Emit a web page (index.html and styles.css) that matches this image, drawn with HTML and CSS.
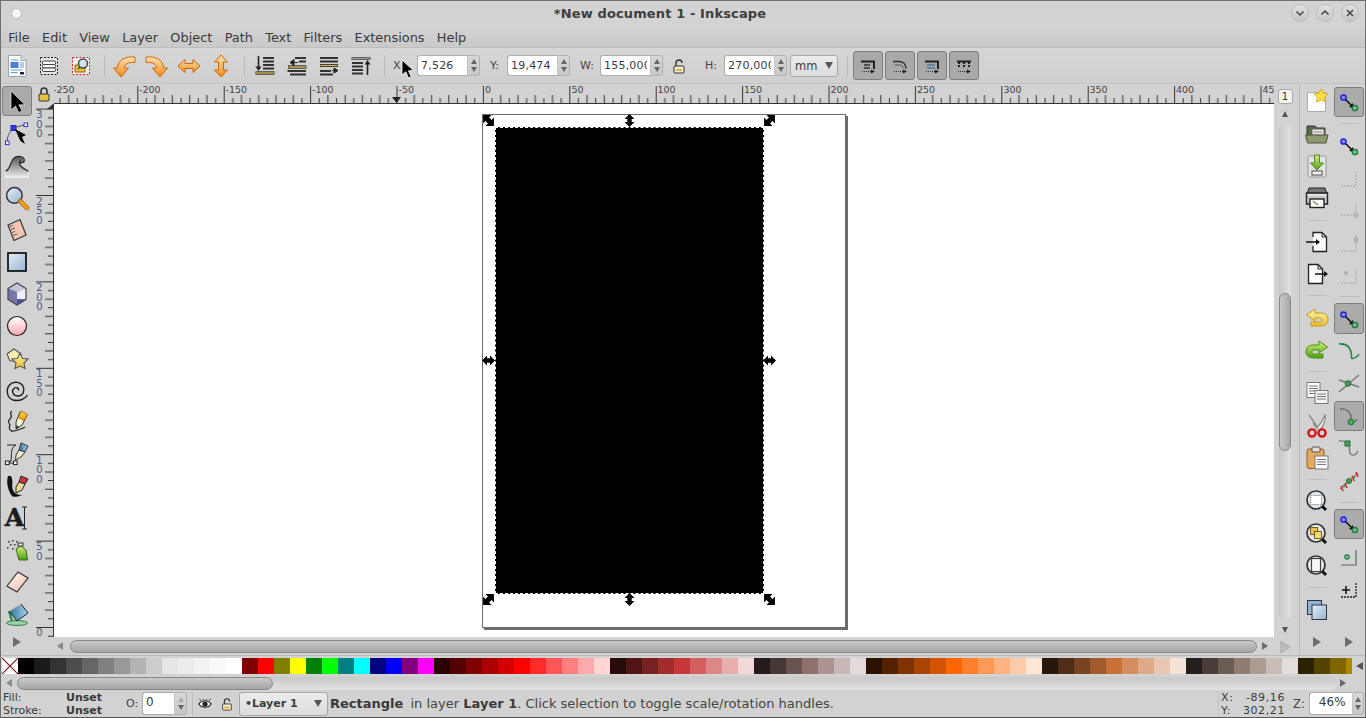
FILE: index.html
```html
<!DOCTYPE html>
<html lang="en">
<head>
<meta charset="utf-8">
<title>*New document 1 - Inkscape</title>
<link rel="stylesheet" href="styles.css">
</head>
<body>
<svg class="defs" aria-hidden="true">
  <defs>
    <linearGradient id="gO" x1="0" y1="0" x2="0" y2="1"><stop offset="0" stop-color="#ffe2b0"/><stop offset="1" stop-color="#f18a14"/></linearGradient>
    <linearGradient id="gY" x1="0" y1="0" x2="0" y2="1"><stop offset="0" stop-color="#fff6b0"/><stop offset="1" stop-color="#e8bc2c"/></linearGradient>
    <linearGradient id="gYs" x1="0" y1="0" x2="0" y2="1"><stop offset="0" stop-color="#ffe040"/><stop offset="1" stop-color="#f09a10"/></linearGradient>
    <linearGradient id="gG" x1="0" y1="0" x2="0" y2="1"><stop offset="0" stop-color="#d4f080"/><stop offset="1" stop-color="#4ea012"/></linearGradient>
    <linearGradient id="gB" x1="0" y1="0" x2="1" y2="1"><stop offset="0" stop-color="#eaf1f8"/><stop offset="1" stop-color="#92b2d0"/></linearGradient>
    <linearGradient id="gP" x1="0" y1="0" x2="0" y2="1"><stop offset="0" stop-color="#ffffff"/><stop offset="1" stop-color="#ffa8b4"/></linearGradient>
    <linearGradient id="gK" x1="0" y1="0" x2="0" y2="1"><stop offset="0" stop-color="#555"/><stop offset="1" stop-color="#ececec"/></linearGradient>
    <linearGradient id="gE" x1="0" y1="0" x2="1" y2="1"><stop offset="0" stop-color="#fff"/><stop offset="1" stop-color="#f0b8a4"/></linearGradient>
    <linearGradient id="gC" x1="0" y1="0" x2="1" y2="0"><stop offset="0" stop-color="#2f6f95"/><stop offset="1" stop-color="#a8d4ee"/></linearGradient>
    <pattern id="hticks" patternUnits="userSpaceOnUse" x="-3.1" y="0" width="86.4" height="20">
      <path d="M.5 2V19M9.14 14V19M17.78 11V19M26.42 14V19M35.06 11V19M43.7 14V19M52.34 11V19M60.98 14V19M69.62 11V19M78.26 14V19" stroke="#333" fill="none"/>
    </pattern>
    <pattern id="vticks" patternUnits="userSpaceOnUse" x="0" y="4.6" width="18" height="86.4">
      <path d="M0 .5H17M12 9.14H17M9 17.78H17M12 26.42H17M9 35.06H17M12 43.7H17M9 52.34H17M12 60.98H17M9 69.62H17M12 78.26H17" stroke="#333" fill="none"/>
    </pattern>
    <symbol id="snapnodes" viewBox="0 0 24 24">
      <path d="M7 8L16 17" stroke="#111" stroke-width="1.6"/><path d="M12 17l5 1-1-5z" fill="#111"/>
      <circle cx="6.5" cy="7.5" r="2.6" fill="#8c8ce8" stroke="#2222dd" stroke-width="1.5"/>
      <circle cx="18" cy="18" r="2.6" fill="#7cc08c" stroke="#1f7f40" stroke-width="1.5"/>
    </symbol>
    <symbol id="lock" viewBox="0 0 16 16">
      <path d="M5 8V5a3 3 0 0 1 6 0v3" fill="none" stroke="#333" stroke-width="1.6"/>
      <rect x="3" y="8" width="10" height="7" rx="1" fill="#e8c040" stroke="#333"/>
    </symbol>
    <symbol id="unlock" viewBox="0 0 16 16">
      <path d="M5 8V5a3 3 0 0 1 6 0" fill="none" stroke="#333" stroke-width="1.4"/>
      <rect x="3" y="8" width="10" height="7" rx="1" fill="#f4efd0" stroke="#333"/><rect x="5" y="11" width="6" height="2" fill="#e0b840"/>
    </symbol>
    <symbol id="harrow" viewBox="0 0 13 13">
      <path d="M6.5 0L11.500 5H8.700V8H11.500L6.500 13L1.500 8H4.300V5H1.500Z" fill="#000"/>
    </symbol>
  </defs>
</svg>

<div class="app">
  <header class="titlebar">
    <span class="wm-dot"></span>
    <div class="wm-title">*New document 1 - Inkscape</div>
    <div class="wm-buttons">
      <span class="wm-btn"><svg viewBox="0 0 10 10"><path d="M1.5 3.5L5 7L8.5 3.5" fill="none" stroke="#444" stroke-width="1.5"/></svg></span>
      <span class="wm-btn"><svg viewBox="0 0 10 10"><path d="M1.5 6.5L5 3L8.5 6.5" fill="none" stroke="#444" stroke-width="1.5"/></svg></span>
      <span class="wm-btn"><svg viewBox="0 0 10 10"><path d="M2 2L8 8M8 2L2 8" fill="none" stroke="#444" stroke-width="1.5"/></svg></span>
    </div>
  </header>

  <nav class="menubar">
    <span>File</span><span>Edit</span><span>View</span><span>Layer</span><span>Object</span><span>Path</span><span>Text</span><span>Filters</span><span>Extensions</span><span>Help</span>
  </nav>

  <div class="toolbar">
    <span class="tt"><svg class="ic" viewBox="0 0 24 24"><path d="M3.5 1.5H16L21 6.5V22.500H3.500Z" fill="#fff" stroke="#9aa6b0"/><path d="M16 1.500V6.500H21" fill="#dde" stroke="#9aa6b0"/><rect x="5.500" y="8" width="8" height="6" fill="#4a80cc"/><path d="M5.500 6h8M5.500 16h12M5.500 18.500h7M15 9h4M15 11h4M15 13h4" stroke="#6a98d4"/><path d="M15 18h4v2.500h-4z" fill="#223"/></svg></span>
    <span class="tt"><svg class="ic" viewBox="0 0 24 24"><rect x="3.500" y="3.500" width="17" height="17" fill="#e4e4e4" stroke="#222" stroke-dasharray="2 1.500"/><path d="M7 7h10a1.500 1.500 0 0 1 0 3.500h-10a1.500 1.500 0 0 1 0-3.500z" fill="#fbfbfb" stroke="#444"/><path d="M7 10.500h10a1.500 1.500 0 0 1 0 3.500h-10a1.500 1.500 0 0 1 0-3.500z" fill="#fbfbfb" stroke="#444"/><path d="M7 14h10a1.500 1.500 0 0 1 0 3.500h-10a1.500 1.500 0 0 1 0-3.500z" fill="#fbfbfb" stroke="#444"/></svg></span>
    <span class="tt"><svg class="ic" viewBox="0 0 24 24"><rect x="3.500" y="3.500" width="17" height="17" fill="#eee" stroke="#d02828" stroke-dasharray="2 1.500"/><path d="M6 18V11h4l1 1.500h5V18z" fill="#e8c040" stroke="#8a6a10"/><circle cx="14" cy="9.500" r="4.500" fill="#cfe2f0" stroke="#444" stroke-width="1.400"/><path d="M11 13l-2 2" stroke="#444" stroke-width="1.600"/></svg></span>
    <span class="tsep tsep1"></span>
    <span class="tt"><svg class="ic" viewBox="0 0 24 24"><path d="M23 3C14 2 5.500 5.500 5.500 14H1.500L9 23L16.500 14H12.500C12.500 10 16 8 23 8.500Z" fill="url(#gO)" stroke="#c8680c"/></svg></span>
    <span class="tt"><svg class="ic nudge" viewBox="0 0 24 24"><path d="M1 3C10 2 18.500 5.500 18.500 14H22.500L15 23L7.500 14H11.500C11.500 10 8 8 1 8.500Z" fill="url(#gO)" stroke="#c8680c"/></svg></span>
    <span class="tt"><svg class="ic nudge" viewBox="0 0 24 24"><path d="M1 12L8 5.500V9.500H16V5.500L23 12L16 18.500V14.500H8V18.500Z" fill="url(#gO)" stroke="#c8680c"/></svg></span>
    <span class="tt"><svg class="ic nudge" viewBox="0 0 24 24"><path d="M12 1L18.500 8H14.500V16H18.500L12 23L5.500 16H9.500V8H5.500Z" fill="url(#gO)" stroke="#c8680c"/></svg></span>
    <span class="tsep tsep2"></span>
    <span class="tt"><svg class="ic" viewBox="0 0 24 24"><path d="M10 4H21M10 7.500H21M10 11H21M10 14.500H21" stroke="#333" stroke-width="2"/><path d="M5.500 2V14" stroke="#222" stroke-width="1.600"/><path d="M2.500 12.500H8.500L5.500 17Z" fill="#222"/><path d="M2.500 19H21.500" stroke="#333" stroke-width="3.400"/><path d="M3 19H21" stroke="#d8b850" stroke-width="1.400"/></svg></span>
    <span class="tt"><svg class="ic" viewBox="0 0 24 24"><path d="M10 4H21M14 7.500H21M2.500 17H21M5 20.500H21" stroke="#333" stroke-width="2"/><path d="M5 8.500L9 5.500V11.500ZM9 8.500H13" fill="#222" stroke="#222"/><path d="M3 13H21.500" stroke="#333" stroke-width="3.400"/><path d="M3.500 13H21" stroke="#d8b850" stroke-width="1.400"/></svg></span>
    <span class="tt"><svg class="ic" viewBox="0 0 24 24"><path d="M3 4H21M3 7.500H21M3 17H14M3 20.500H16" stroke="#333" stroke-width="2"/><path d="M3 11.500H21" stroke="#333" stroke-width="3"/><path d="M3.500 11.500H20.500" stroke="#d8b850" stroke-width="1.200"/><path d="M15 16.500H18M17 14L21 16.500L17 19Z" fill="#222" stroke="#222"/></svg></span>
    <span class="tt"><svg class="ic" viewBox="0 0 24 24"><path d="M3 9H14M3 12.500H14M3 16H14M3 19.500H14" stroke="#333" stroke-width="2"/><path d="M2.500 4.500H21.500" stroke="#333" stroke-width="2.400"/><path d="M3 4.500H21" stroke="#999" stroke-width="1"/><path d="M18.500 21V9" stroke="#222" stroke-width="1.600"/><path d="M15.500 10.500H21.500L18.500 6Z" fill="#222"/></svg></span>
    <span class="tsep tsep3"></span>

    <label class="flabel lx">X:</label>
    <div class="spin"><span class="entry">7,526</span><span class="arrows"><i class="up"></i><i class="down"></i></span></div>
    <label class="flabel ly">Y:</label>
    <div class="spin"><span class="entry">19,474</span><span class="arrows"><i class="up"></i><i class="down"></i></span></div>
    <label class="flabel lw">W:</label>
    <div class="spin"><span class="entry">155,000</span><span class="arrows"><i class="up"></i><i class="down"></i></span></div>
    <span class="lockbox"><svg class="lk" viewBox="0 0 16 16"><use href="#unlock"/></svg></span>
    <label class="flabel lh">H:</label>
    <div class="spin"><span class="entry">270,000</span><span class="arrows"><i class="up"></i><i class="down"></i></span></div>
    <div class="combo unit"><span>mm</span><i class="caret"></i></div>
    <span class="tsep tsep4"></span>
    <span class="snapbtn"><svg class="ics" viewBox="0 0 16 16"><path d="M1 3.500H14V11" fill="none" stroke="#222" stroke-width="2"/><path d="M4 7H10M4 10H10" stroke="#333" stroke-width="1.400"/><path d="M2 13.500H11" stroke="#333" stroke-dasharray="1 1"/><path d="M11 11.500L15 13.500L11 15.500Z" fill="#222"/></svg></span>
    <span class="snapbtn"><svg class="ics" viewBox="0 0 16 16"><path d="M1 3.500H7C11 3.500 14 6 14 10.500" fill="none" stroke="#333" stroke-width="1.600"/><path d="M3 7H8C10 7 11 8.500 11 10" fill="none" stroke="#555"/><path d="M2 13.500H11" stroke="#333" stroke-dasharray="1 1"/><path d="M11 11.500L15 13.500L11 15.500Z" fill="#222"/></svg></span>
    <span class="snapbtn"><svg class="ics" viewBox="0 0 16 16"><path d="M1 3.500H14V11" fill="none" stroke="#222" stroke-width="2"/><path d="M3 7H11M3 10H11" stroke="#4a78a8" stroke-width="1.400"/><path d="M2 13.500H11" stroke="#333" stroke-dasharray="1 1"/><path d="M11 11.500L15 13.500L11 15.500Z" fill="#222"/></svg></span>
    <span class="snapbtn"><svg class="ics" viewBox="0 0 16 16"><path d="M1 3.500H15" stroke="#222" stroke-width="2"/><path d="M3 4V9M8 4V9M13 4V9" stroke="#222" stroke-width="2" stroke-dasharray="2 1"/><path d="M2 13.500H11" stroke="#333" stroke-dasharray="1 1"/><path d="M11 11.500L15 13.500L11 15.500Z" fill="#222"/></svg></span>
  </div>

  <div class="workspace">
    <aside class="toolbox">
      <span class="tool active"><svg class="ic" viewBox="0 0 24 24"><path d="M6 2V21L10.500 17L13.800 23.500L17 22L13.800 15.800H20Z" fill="#000" stroke="#fff" stroke-width=".6"/></svg></span>
      <span class="tool"><svg class="ic" viewBox="0 0 24 24"><path d="M2 21C2 10 8 4 21 3" fill="none" stroke="#555"/><rect x="6" y="3.500" width="5" height="5" fill="#3040e0" stroke="#2020c0"/><rect x="19" y="1" width="3.600" height="3.600" fill="#fff" stroke="#3030e0"/><rect x=".5" y="19" width="3.600" height="3.600" fill="#fff" stroke="#3030e0"/><path d="M10 7L21 13L17 15L20 22L15.500 19L13.500 15Z" fill="#000"/></svg></span>
      <span class="tool"><svg class="ic big" viewBox="0 0 24 24"><path d="M1 23V17C6 15 5 8 9 4.500C12 1.500 19 2.500 19 6.500C19 9.500 15 9.500 15 7.500C13 11 17 14 23 17V23Z" fill="url(#gK)" stroke="#fff" stroke-width=".6"/><path d="M1 17C6 15 5 8 9 4.500C12 1.500 19 2.500 19 6.500C19 9.500 15 9.500 15 7.500C13 11 17 14 23 17" fill="none" stroke="#222" stroke-width="1.200"/></svg></span>
      <span class="tool"><svg class="ic big" viewBox="0 0 24 24"><circle cx="9.500" cy="9.500" r="7.500" fill="url(#gB)" stroke="#333" stroke-width="1.400"/><path d="M15 15L22 22" stroke="#a86808" stroke-width="4.400" stroke-linecap="round"/><path d="M15.500 15.500L22 22" stroke="#f0a020" stroke-width="2.800" stroke-linecap="round"/></svg></span>
      <span class="tool"><svg class="ic" viewBox="0 0 24 24"><path d="M3 7L15 1.500L21 17L9 22.500Z" fill="#f2c4b0" stroke="#333" stroke-width="1.200"/><path d="M4.500 8.500L8 7.500M6 11.500L10 10M7 14.500L10 13.500M8 17.500L12 16" stroke="#555"/></svg></span>
      <span class="tool"><svg class="ic" viewBox="0 0 24 24"><rect x="3" y="3" width="18" height="18" fill="url(#gB)" stroke="#000" stroke-width="1.600"/></svg></span>
      <span class="tool"><svg class="ic" viewBox="0 0 24 24"><path d="M12 1L21 6.500V17.500L12 23L3 17.500V6.500Z" fill="#7676a8"/><path d="M3 6.500L12 1L21 6.500L12 10L3 6.500Z" fill="#c4c4dc"/><path d="M12 10V17L21 17.500V6.500Z" fill="#f0f0f6"/><path d="M12 17L21 17.500L12 23Z" fill="#5050a0"/><path d="M12 1L21 6.500V17.500L12 23L3 17.500V6.500Z" fill="none" stroke="#444" stroke-width="1.200"/></svg></span>
      <span class="tool"><svg class="ic" viewBox="0 0 24 24"><circle cx="12" cy="12" r="9.500" fill="url(#gP)" stroke="#222" stroke-width="1.200"/></svg></span>
      <span class="tool"><svg class="ic" viewBox="0 0 24 24"><path d="M2 8L9 3L16 8L14 15H5Z" fill="#f6eeb4" stroke="#555" stroke-width="1.100"/><path d="M15 7L17.500 12.500L23 13L19 17L20 22.500L15 20L10 22.500L11 17L7 13L12.500 12.500Z" fill="url(#gY)" stroke="#555" stroke-width="1.100"/></svg></span>
      <span class="tool"><svg class="ic" viewBox="0 0 24 24"><path d="M13 12.500C15 10.500 11 8.500 9 10.500C6 13 8 18 13 18C18.500 18 20 12 18 8C15 3.500 8 3 4.500 7C.5 12 2 20 8 22C14 23.500 20 21.500 22.500 17" fill="none" stroke="#222" stroke-width="1.400"/></svg></span>
      <span class="tool"><svg class="ic" viewBox="0 0 24 24"><path d="M7 1C3 3 9 6 5 9C2 11 4 13 5 15C3 19 6 22 9 21C13 20 17 19 20 17" fill="none" stroke="#222" stroke-width="1.200"/><path d="M15 2L22 5.500L17 15L11 19L11 12Z" fill="#fbf4d8" stroke="#333"/><path d="M16 1L22.500 4.500L19 10.500L13.500 7.500Z" fill="url(#gYs)" stroke="#b07010"/><path d="M11.500 15L11 19L14 17Z" fill="#222"/></svg></span>
      <span class="tool"><svg class="ic" viewBox="0 0 24 24"><path d="M2 3H11C5 6 7 12 6 19L3 20" fill="none" stroke="#222" stroke-width="1"/><rect x=".5" y="19" width="3.600" height="3.600" fill="#fff" stroke="#222"/><rect x="8.500" y="19" width="3.600" height="3.600" fill="#fff" stroke="#222"/><path d="M4 21H9" stroke="#222"/><path d="M16 1L23 4L20 10L14 8Z" fill="url(#gC)" stroke="#333"/><path d="M14 8L20 10L16 15L10.500 18L11 13Z" fill="#f0e8c8" stroke="#333"/></svg></span>
      <span class="tool"><svg class="ic" viewBox="0 0 24 24"><path d="M3 2C1 8 3 17 7 22C10 24 13 22 18 21C12 21 9 19 8 16C6 12 9 8 6 2Z" fill="#111"/><path d="M16 2L23 5L20 10L14 8Z" fill="#cc3340" stroke="#222"/><path d="M14 8L20 10L17 16L11 19L11 13Z" fill="#f0d890" stroke="#222"/></svg></span>
      <span class="tool textool"><span class="biga">A</span><svg class="ibeam" viewBox="0 0 7 24"><path d="M3.500 1V23M1 1H6M1 23H6" stroke="#222" fill="none"/></svg></span>
      <span class="tool"><svg class="ic" viewBox="0 0 24 24"><path d="M3 3h1.500v1.500H3zM7 2h1.500v1.500H7zM5 6h1.500v1.500H5zM9 6h1.500v1.500H9zM2 9h1.500v1.500H2zM7 10h1.500v1.500H7zM11 3h1.500v1.500H11z" fill="#333"/><rect x="13" y="5" width="5" height="3" fill="#eee" stroke="#333"/><path d="M11 11L16 8L21 12L22.500 22H14Z" fill="url(#gG)" stroke="#3a6a10"/></svg></span>
      <span class="tool"><svg class="ic" viewBox="0 0 24 24"><path d="M2 16L13 2L23 8L12 22Z" fill="url(#gE)" stroke="#333" stroke-width="1.200"/></svg></span>
      <span class="tool"><svg class="ic" viewBox="0 0 24 24"><ellipse cx="12" cy="21" rx="10.500" ry="2.400" fill="#9ed2a4" stroke="#2f7a48"/><path d="M4 9L7 19" stroke="#2f8a50" stroke-width="2.400"/><path d="M4 9L16 2L23 11L12 19Z" fill="url(#gC)" stroke="#222"/><path d="M4 9L16 2" stroke="#ccc" stroke-width="1.400"/></svg></span>
      <span class="more toolmore"></span>
    </aside>

    <div class="center">
      <div class="rulerrow">
        <div class="rcorner"><svg class="lk" viewBox="0 0 16 16"><use href="#lock"/></svg></div>
        <svg class="hruler" width="1220" height="20">
          <rect width="1220" height="20" fill="url(#hticks)"/>
          <path d="M0 19.500H1220" stroke="#333"/>
          <polygon points="338,13 347,13 342.500,19" fill="#222"/>
          <g class="rtext">
            <text x="-1" y="9">-250</text><text x="85" y="9">-200</text><text x="171.500" y="9">-150</text><text x="258" y="9">-100</text><text x="344.500" y="9">-50</text><text x="431" y="9">0</text><text x="517.500" y="9">50</text><text x="603.500" y="9">100</text><text x="690" y="9">150</text><text x="776.500" y="9">200</text><text x="863" y="9">250</text><text x="949.500" y="9">300</text><text x="1035.500" y="9">350</text><text x="1122" y="9">400</text><text x="1208.500" y="9">450</text>
          </g>
        </svg>
      </div>
      <div class="midrow">
        <svg class="vruler" width="18" height="533">
          <rect width="18" height="533" fill="url(#vticks)"/>
          <path d="M17.500 0V533" stroke="#333"/>
          <polygon points="11,5 17,0 17,5" fill="#333"/>
          <g class="rtext vt">
            <text x="3.500" y="14">3</text><text x="3.500" y="23.500">0</text><text x="3.500" y="33">0</text>
            <text x="3.500" y="100.500">2</text><text x="3.500" y="110">5</text><text x="3.500" y="119.500">0</text>
            <text x="3.500" y="187">2</text><text x="3.500" y="196.500">0</text><text x="3.500" y="206">0</text>
            <text x="3.500" y="273">1</text><text x="3.500" y="282.500">5</text><text x="3.500" y="292">0</text>
            <text x="3.500" y="359.500">1</text><text x="3.500" y="369">0</text><text x="3.500" y="378.500">0</text>
            <text x="3.500" y="446">5</text><text x="3.500" y="455.500">0</text>
            <text x="3.500" y="532">0</text>
          </g>
        </svg>
        <main class="canvas">
          <div class="page"></div>
          <div class="rect"></div>
          <svg class="hd tl" viewBox="0 0 13 13"><use href="#harrow"/></svg>
          <svg class="hd tc" viewBox="0 0 13 13"><use href="#harrow"/></svg>
          <svg class="hd tr" viewBox="0 0 13 13"><use href="#harrow"/></svg>
          <svg class="hd ml" viewBox="0 0 13 13"><use href="#harrow"/></svg>
          <svg class="hd mr" viewBox="0 0 13 13"><use href="#harrow"/></svg>
          <svg class="hd bl" viewBox="0 0 13 13"><use href="#harrow"/></svg>
          <svg class="hd bc" viewBox="0 0 13 13"><use href="#harrow"/></svg>
          <svg class="hd br" viewBox="0 0 13 13"><use href="#harrow"/></svg>
        </main>
      </div>
      <div class="hscroll">
        <i class="arr-left"></i>
        <div class="track"><div class="thumb hthumb"></div></div>
        <i class="arr-right"></i>
      </div>
    </div>

    <div class="vscroll">
      <span class="zoomfix">1</span>
      <i class="arr-up"></i>
      <div class="vtrack"><div class="vthumb"></div></div>
      <i class="arr-down"></i>
      <svg class="cms" viewBox="0 0 12 12"><path d="M2 0L11 6L2 12Z" fill="#bbb" stroke="#aaa"/></svg>
    </div>

    <aside class="cmdbar">
      <span class="cmd"><svg class="ic" viewBox="0 0 24 24"><path d="M2.500 3.500H20.500V22.500H2.500Z" fill="#fdfdfd" stroke="#aaa"/><path d="M16 0L18.300 4.300L23 5L19.600 8.300L20.400 13L16 10.800L11.600 13L12.400 8.300L9 5L13.700 4.300Z" fill="#ffdf40" stroke="#d8b020"/></svg></span>
      <span class="cmd"><svg class="ic" viewBox="0 0 24 24"><path d="M2 4H10L12 6H20V18H2Z" fill="#5a6a48" stroke="#333"/><rect x="7" y="7" width="12" height="9" fill="#e6e8e0" stroke="#666"/><path d="M9 10H17M9 13H17" stroke="#888"/><path d="M.5 13H23L21 21H2.500Z" fill="#8a9a6e" stroke="#4a5438"/></svg></span>
      <span class="cmd"><svg class="ic" viewBox="0 0 24 24"><rect x="3" y="2" width="18" height="21" rx="1.500" fill="#e4e4e4" stroke="#999"/><rect x="7" y="17" width="10" height="4" fill="#fff" stroke="#444"/><path d="M9.500 1H14.500V9H18.500L12 16L5.500 9H9.500Z" fill="url(#gG)" stroke="#4a8a10"/></svg></span>
      <span class="cmd"><svg class="ic" viewBox="0 0 24 24"><path d="M4 2H20L22 8H2Z" fill="#777" stroke="#222"/><path d="M1.500 7H22.500V18H1.500Z" fill="#c8c8c8" stroke="#222" stroke-width="1.400"/><rect x="5" y="13" width="14" height="8.500" fill="#fff" stroke="#222" stroke-width="1.400"/><path d="M8 15L13 19" stroke="#6a9a50" stroke-width="1.500"/><path d="M2.500 9H21.500" stroke="#fff"/></svg></span>
      <span class="csep"></span>
      <span class="cmd"><svg class="ic" viewBox="0 0 24 24"><path d="M8 7V2.500H17L21.500 7V21.500H8V16" fill="#fbfbfb" stroke="#222" stroke-width="1.300"/><path d="M17 2.500V7H21.500" fill="none" stroke="#222"/><path d="M1 12H12" stroke="#111" stroke-width="1.500"/><path d="M11 9L15 12L11 15Z" fill="#111"/></svg></span>
      <span class="cmd"><svg class="ic" viewBox="0 0 24 24"><path d="M3.500 2.500H13L17.500 7V21.500H3.500Z" fill="#fbfbfb" stroke="#222" stroke-width="1.300"/><path d="M13 2.500V7H17.500" fill="none" stroke="#222"/><path d="M10 12H20" stroke="#111" stroke-width="1.500"/><path d="M19 9L23 12L19 15Z" fill="#111"/></svg></span>
      <span class="csep"></span>
      <span class="cmd"><svg class="ic" viewBox="0 0 24 24"><path d="M1.500 9L10 3V7H15C21 7 23 10 23 14C23 18 20 20 15 20H6V16H14.500C18 16 18 12 14.500 12H10V15Z" fill="url(#gY)" stroke="#c89a18"/></svg></span>
      <span class="cmd"><svg class="ic" viewBox="0 0 24 24"><path d="M22.500 9L14 3V7H9C3 7 1 10 1 14C1 18 4 20 9 20H18V16H9.500C6 16 6 12 9.500 12H14V15Z" fill="url(#gG)" stroke="#4a9010"/></svg></span>
      <span class="csep"></span>
      <span class="cmd"><svg class="ic" viewBox="0 0 24 24"><rect x="2" y="1.500" width="13" height="15" fill="#fff" stroke="#777"/><path d="M4 5H13M4 7.500H13M4 10H13M4 12.500H10" stroke="#777"/><rect x="10" y="9.500" width="13" height="13" fill="#f4f4f4" stroke="#777"/><path d="M12 13H21M12 15.500H21M12 18H21" stroke="#777"/></svg></span>
      <span class="cmd"><svg class="ic" viewBox="0 0 24 24"><path d="M4 1L12.500 13L16 9L20 1C21 5 20 9 15.500 15.500M12 15L8 9" fill="#eee" stroke="#888" stroke-width="1.300"/><circle cx="7" cy="19" r="3.600" fill="none" stroke="#d01818" stroke-width="2.400"/><circle cx="17" cy="19" r="3.600" fill="none" stroke="#d01818" stroke-width="2.400"/></svg></span>
      <span class="cmd"><svg class="ic" viewBox="0 0 24 24"><rect x="2" y="3" width="17" height="19.500" rx="2" fill="#e4a860" stroke="#8a6020"/><rect x="7" y="1" width="8" height="5" rx="1" fill="#ddd" stroke="#555"/><rect x="10" y="10" width="13" height="13" fill="#fafafa" stroke="#777"/><path d="M12 13.500H21M12 16H21M12 18.500H21" stroke="#777"/></svg></span>
      <span class="csep"></span>
      <span class="cmd"><svg class="ic" viewBox="0 0 24 24"><circle cx="11" cy="11" r="9" fill="#dfe8ee" stroke="#333" stroke-width="1.700"/><rect x="5.500" y="6.500" width="11" height="9" fill="#fff" stroke="#888" stroke-dasharray="1.500 1"/><path d="M17.500 17.500L21 21" stroke="#111" stroke-width="3"/></svg></span>
      <span class="cmd"><svg class="ic" viewBox="0 0 24 24"><circle cx="11" cy="11" r="9" fill="#dfe8ee" stroke="#333" stroke-width="1.700"/><rect x="5.500" y="5.500" width="7" height="7" fill="#e8c050" stroke="#806010"/><rect x="9.500" y="9.500" width="7" height="7" fill="#f0d880" stroke="#806010"/><path d="M17.500 17.500L21 21" stroke="#111" stroke-width="3"/></svg></span>
      <span class="cmd"><svg class="ic" viewBox="0 0 24 24"><circle cx="11" cy="11" r="9" fill="#dfe8ee" stroke="#333" stroke-width="1.700"/><rect x="6.500" y="4.500" width="9" height="13" fill="#f8f8f8" stroke="#444" stroke-width="1.200"/><path d="M17.500 17.500L21 21" stroke="#111" stroke-width="3"/></svg></span>
      <span class="csep"></span>
      <span class="cmd"><svg class="ic" viewBox="0 0 24 24"><rect x="2.500" y="2.500" width="14" height="14" fill="#8fb4d4" stroke="#334"/><rect x="7" y="7" width="14.500" height="14.500" fill="url(#gB)" stroke="#334"/></svg></span>
      <span class="more barmore"></span>
    </aside>

    <aside class="snapbar">
      <span class="cmd on"><svg class="ic" viewBox="0 0 24 24"><use href="#snapnodes"/></svg></span>
      <span class="csep"></span>
      <span class="cmd"><svg class="ic" viewBox="0 0 24 24"><use href="#snapnodes"/></svg></span>
      <span class="cmd"><svg class="ic" viewBox="0 0 24 24"><path d="M4 20H19V5" fill="none" stroke="#b4b4b4" stroke-width="1.300" stroke-dasharray="2 1"/></svg></span>
      <span class="cmd"><svg class="ic" viewBox="0 0 24 24"><path d="M4 17H19V4M19 17V21" fill="none" stroke="#b4b4b4" stroke-width="1.300" stroke-dasharray="2 1"/><circle cx="19" cy="17" r="2.600" fill="#b4b4b4"/></svg></span>
      <span class="cmd"><svg class="ic" viewBox="0 0 24 24"><path d="M4 20H19V13" fill="none" stroke="#b4b4b4" stroke-width="1.300" stroke-dasharray="2 1"/><ellipse cx="19" cy="9" rx="2.200" ry="3.600" fill="#b4b4b4"/><path d="M19 3V5" stroke="#b4b4b4"/></svg></span>
      <span class="cmd"><svg class="ic" viewBox="0 0 24 24"><path d="M4 20H19V5" fill="none" stroke="#b4b4b4" stroke-width="1.300" stroke-dasharray="2 1"/><circle cx="9" cy="10" r="2.200" fill="#b4b4b4"/></svg></span>
      <span class="csep"></span>
      <span class="cmd on"><svg class="ic" viewBox="0 0 24 24"><use href="#snapnodes"/></svg></span>
      <span class="cmd"><svg class="ic" viewBox="0 0 24 24"><path d="M2 5C10 4 15 9 14.500 19C15 20 20 19 22 15" fill="none" stroke="#1f8a3a" stroke-width="1.600"/></svg></span>
      <span class="cmd"><svg class="ic" viewBox="0 0 24 24"><path d="M2 21L22 4M2 9L22 16" stroke="#777" stroke-width="1.400"/><circle cx="11" cy="12.500" r="2.800" fill="#4e9a5a" stroke="#1f6f38"/></svg></span>
      <span class="cmd on"><svg class="ic" viewBox="0 0 24 24"><path d="M3 5C10 4 15 9 14 16C14 19 18 19 20 15" fill="none" stroke="#666" stroke-width="1.400"/><circle cx="14" cy="18" r="2.600" fill="#5fa868" stroke="#1f8038" stroke-width="1.300"/></svg></span>
      <span class="cmd"><svg class="ic" viewBox="0 0 24 24"><path d="M2 5C9 4 13 9 12.500 15C13 20 18 21 21 15" fill="none" stroke="#777" stroke-width="1.400"/><rect x="8" y="5" width="5" height="5" fill="#4e9a5a" stroke="#1f6f38"/></svg></span>
      <span class="cmd"><svg class="ic" viewBox="0 0 24 24"><path d="M3 21L21 5" stroke="#c43030" stroke-width="1"/><path d="M4 18L6 23M8 15L10 20M15 8L17 13M19 4L21 9" stroke="#c43030" stroke-width="1.600"/><circle cx="12" cy="13" r="2.500" fill="#4e9a5a" stroke="#1f6f38"/><circle cx="7" cy="18" r="1.500" fill="#4e9a5a"/><circle cx="17" cy="9" r="1.500" fill="#4e9a5a"/></svg></span>
      <span class="csep"></span>
      <span class="cmd on"><svg class="ic" viewBox="0 0 24 24"><use href="#snapnodes"/></svg></span>
      <span class="cmd"><svg class="ic" viewBox="0 0 24 24"><path d="M4 21H19V6" fill="none" stroke="#666" stroke-width="1.200"/><circle cx="10" cy="13" r="2.200" fill="#7cc08c" stroke="#1f7f40" stroke-width="1.200"/></svg></span>
      <span class="cmd"><svg class="ic" viewBox="0 0 24 24"><path d="M4 20H19V6" fill="none" stroke="#222" stroke-width="1.300" stroke-dasharray="2 1"/><path d="M5 13H13M9 9V17" stroke="#111" stroke-width="1.500"/></svg></span>
      <span class="more barmore"></span>
    </aside>
  </div>

  <div class="palette">
    <svg class="noneswatch" viewBox="0 0 16 16"><rect width="16" height="16" fill="#fff"/><path d="M0 0L16 16M16 0L0 16" stroke="#7c1a1a" stroke-width="1.200"/></svg>
    <i style="background:#000000"></i><i style="background:#1a1a1a"></i><i style="background:#333333"></i><i style="background:#4d4d4d"></i><i style="background:#666666"></i><i style="background:#808080"></i><i style="background:#999999"></i><i style="background:#b3b3b3"></i><i style="background:#cccccc"></i><i style="background:#e6e6e6"></i><i style="background:#ececec"></i><i style="background:#f2f2f2"></i><i style="background:#f9f9f9"></i><i style="background:#ffffff"></i>
    <i style="background:#800000"></i><i style="background:#ff0000"></i><i style="background:#808000"></i><i style="background:#ffff00"></i><i style="background:#008000"></i><i style="background:#00ff00"></i><i style="background:#008080"></i><i style="background:#00ffff"></i><i style="background:#000080"></i><i style="background:#0000ff"></i><i style="background:#800080"></i><i style="background:#ff00ff"></i>
    <i style="background:#2b0000"></i><i style="background:#550000"></i><i style="background:#800000"></i><i style="background:#aa0000"></i><i style="background:#d40000"></i><i style="background:#ff0000"></i><i style="background:#ff2a2a"></i><i style="background:#ff5555"></i><i style="background:#ff8080"></i><i style="background:#ffaaaa"></i><i style="background:#ffd5d5"></i>
    <i style="background:#280b0b"></i><i style="background:#501616"></i><i style="background:#782121"></i><i style="background:#a02c2c"></i><i style="background:#c83737"></i><i style="background:#d35f5f"></i><i style="background:#de8787"></i><i style="background:#e9afaf"></i><i style="background:#f4d7d7"></i>
    <i style="background:#241c1c"></i><i style="background:#483737"></i><i style="background:#6c5353"></i><i style="background:#916f6f"></i><i style="background:#ac9393"></i><i style="background:#c8b7b7"></i><i style="background:#e3dbdb"></i>
    <i style="background:#2b1100"></i><i style="background:#552200"></i><i style="background:#803300"></i><i style="background:#aa4400"></i><i style="background:#d45500"></i><i style="background:#ff6600"></i><i style="background:#ff7f2a"></i><i style="background:#ff9955"></i><i style="background:#ffb380"></i><i style="background:#ffccaa"></i><i style="background:#ffe6d5"></i>
    <i style="background:#28170b"></i><i style="background:#502d16"></i><i style="background:#784421"></i><i style="background:#a05a2c"></i><i style="background:#c87137"></i><i style="background:#d38d5f"></i><i style="background:#deaa87"></i><i style="background:#e9c6af"></i><i style="background:#f4e3d7"></i>
    <i style="background:#241f1c"></i><i style="background:#483e37"></i><i style="background:#6c5d53"></i><i style="background:#917c6f"></i><i style="background:#ac9d93"></i><i style="background:#c8beb7"></i><i style="background:#e3dedb"></i>
    <i style="background:#2b2200"></i><i style="background:#554400"></i><i style="background:#806600"></i><i class="lastswatch" style="background:#aa8800"></i>
    <span class="palmenu"></span>
  </div>

  <div class="palscroll">
    <i class="arr-left"></i>
    <div class="track"><div class="thumb pthumb"></div></div>
    <i class="arr-right"></i>
  </div>

  <footer class="statusbar">
    <div class="fs">
      <div class="fsrow"><span class="fsl">Fill:</span><b>Unset</b></div>
      <div class="fsrow"><span class="fsl">Stroke:</span><b>Unset</b></div>
    </div>
    <label class="flabel opl">O:</label>
    <div class="spin small"><span class="entry">0</span><span class="arrows"><i class="up dim"></i><i class="down"></i></span></div>
    <span class="ssep"></span>
    <svg class="eye" viewBox="0 0 16 12"><path d="M1 6C4 1 12 1 15 6C12 11 4 11 1 6Z" fill="#fff" stroke="#222" stroke-width="1.300"/><circle cx="8" cy="6" r="3" fill="#222"/><path d="M3 2L2 0M6 1V0M10 1V0M13 2L14 0" stroke="#222"/></svg>
    <svg class="slock" viewBox="0 0 16 16"><use href="#unlock"/></svg>
    <div class="combo layer"><span>•Layer 1</span><i class="caret"></i></div>
    <div class="msg"><b>Rectangle</b> <span class="inl">in layer</span> <b>Layer 1</b>. Click selection to toggle scale/rotation handles.</div>
    <div class="coords">
      <div class="crow"><span>X:</span><span>-89,16</span></div>
      <div class="crow"><span>Y:</span><span>302,21</span></div>
    </div>
    <label class="flabel zl">Z:</label>
    <div class="spin zoomspin"><span class="entry">46%</span><span class="arrows"><i class="up"></i><i class="down"></i></span></div>
  </footer>

  <svg class="pointer" viewBox="0 0 14 20"><path d="M1 1V16L4.800 12.800L7.500 19L10.200 17.800L7.500 11.800L12.500 11.500Z" fill="#000" stroke="#fff" stroke-width=".8"/></svg>
</div>
</body>
</html>
```

FILE: styles.css
```css
* { box-sizing: border-box; }
html, body { margin: 0; padding: 0; height: 100%; overflow: hidden; }
body { background: #d2d2d2; font-family: "DejaVu Sans", sans-serif; color: #3a3a3a; }
i { display: block; font-style: normal; }
.defs { position: absolute; width: 0; height: 0; }

.app { position: relative; width: 1366px; height: 718px; display: flex; flex-direction: column; border: 1px solid #6f6f6f; border-bottom-color: #555; background: #d2d2d2; }

/* title bar */
.titlebar { height: 25px; flex: none; display: flex; align-items: center; padding: 0 6px 1px 10px; background: #d3d3d3; }
.wm-dot { width: 9px; height: 9px; border-radius: 50%; background: #f6f6f6; box-shadow: 0 0 2px #999; margin-left: 1px; flex: none; }
.wm-title { flex: 1; text-align: center; font-weight: bold; font-size: 13px; letter-spacing: .12px; color: #3e3e3e; padding-left: 8px; }
.wm-buttons { display: flex; gap: 7px; }
.wm-btn { width: 18px; height: 18px; border-radius: 50%; background: linear-gradient(#e2e2e2, #c6c6c6); border: 1px solid #bdbdbd; display: flex; align-items: center; justify-content: center; }
.wm-btn svg { width: 10px; height: 10px; }

/* menu */
.menubar { height: 22px; flex: none; display: flex; align-items: center; padding: 1px 0 0 1px; font-size: 12.900px; background: linear-gradient(#d3d3d3, #c9c9c9); border-bottom: 1px solid #bebebe; }
.menubar span { padding: 0 6.150px; }

/* top toolbar */
.toolbar { height: 36px; flex: none; display: flex; align-items: center; background: linear-gradient(#d6d6d6, #cfcfcf); border-bottom: 1px solid #c2c2c2; }
.tt { width: 32px; height: 32px; flex: none; display: flex; align-items: center; justify-content: center; }
.ic { width: 24px; height: 24px; display: block; flex: none; }
.ic.nudge { margin-left: 2px; }
.ic.big { transform: scale(1.040); }
.tsep { flex: none; width: 1px; height: 22px; background: #bcbcbc; }
.tsep1 { margin: 0 3px 0 7px; }
.tsep2 { margin: 0 4px 0 8px; }
.tsep3 { margin: 0 6px 0 7px; }
.tsep4 { margin: 0 5px 0 9px; }
.flabel { font-size: 11px; color: #444; flex: none; }
.lx { width: 26px; padding-left: 2px; }
.ly { width: 27px; padding-left: 10px; }
.lw { width: 30px; padding-left: 10px; }
.lh { width: 29px; padding-left: 10px; }
.lockbox { width: 32px; flex: none; display: flex; justify-content: center; }
.lk { width: 16px; height: 16px; display: block; }
.spin { display: flex; align-items: stretch; height: 21px; flex: none; }
.entry { width: 51px; background: #fff; border: 1px solid #aeaeae; border-right-color: #c4c4c4; border-radius: 3px 0 0 3px; font-size: 11px; letter-spacing: .22px; line-height: 19px; padding: 0 3px 0 3px; overflow: clip; overflow-clip-margin: content-box; white-space: nowrap; color: #3c3c3c; }
.arrows { width: 12px; display: flex; flex-direction: column; align-items: center; justify-content: center; gap: 3px; background: linear-gradient(#d8d8d8, #c8c8c8); border: 1px solid #b2b2b2; border-left: 0; border-radius: 0 3px 3px 0; }
.up { width: 0; height: 0; border: 3.500px solid transparent; border-top: 0; border-bottom: 5px solid #666; }
.down { width: 0; height: 0; border: 3.500px solid transparent; border-bottom: 0; border-top: 5px solid #666; }
.up.dim { border-bottom-color: #aaa; }
.combo { display: flex; align-items: center; justify-content: space-between; flex: none; background: linear-gradient(#ececec, #dcdcdc); border: 1px solid #a8a8a8; border-radius: 3px; font-size: 12px; color: #3c3c3c; }
.caret { width: 0; height: 0; border: 4.500px solid transparent; border-bottom: 0; border-top: 7px solid #555; }
.unit { width: 48px; height: 22px; margin-left: 3px; padding: 0 4px 0 4px; font-size: 11.500px; }
.snapbtn { width: 30px; height: 29px; margin-right: 2px; flex: none; border: 1px solid #7e7e7e; border-radius: 3px; background: #a9a9a9; display: flex; align-items: center; justify-content: center; }
.ics { width: 16px; height: 16px; display: block; }

/* workspace */
.workspace { height: 571px; flex: none; display: flex; }
.toolbox { width: 35px; flex: none; display: flex; flex-direction: column; padding-top: 2px; position: relative; }
.tool { width: 30px; height: 30px; margin: 1px 0 1px 1px; flex: none; display: flex; align-items: center; justify-content: center; border: 1px solid transparent; border-radius: 3px; }
.tool:first-child { margin-top: 0; margin-bottom: 2px; }
.tool.active { background: #ababab; border-color: #7e7e7e; }
.textool { position: relative; }
.biga { font-family: "DejaVu Serif", serif; font-weight: bold; font-size: 25px; line-height: 26px; color: #1c1c1c; -webkit-text-stroke: .5px #1c1c1c; margin-left: -1px; }
.ibeam { width: 7px; height: 24px; margin-left: -3px; flex: none; }
.more { width: 0; height: 0; border: 5px solid transparent; border-right: 0; border-left: 8px solid #6e6e6e; display: block; }
.toolmore { margin: 7px 0 0 12px; }
.barmore { margin: auto 0 8px 0; }

.center { width: 1238px; flex: none; display: flex; flex-direction: column; }
.rulerrow { height: 20px; flex: none; display: flex; }
.rcorner { width: 18px; flex: none; padding: 2px 0 0 0; }
.hruler, .vruler { display: block; flex: none; }
.rtext text { font-family: "DejaVu Sans", sans-serif; font-size: 9.500px; fill: #444; }
.vt text { text-anchor: middle; fill: #4a5a78; font-size: 10px; }
.midrow { height: 533px; flex: none; display: flex; }
.canvas { position: relative; width: 1220px; flex: none; background: #fff; overflow: hidden; }
.page { position: absolute; left: 428px; top: 10px; width: 364px; height: 514px; background: #fff; border: 1px solid #6c6c6c; box-shadow: 2px 2px 0 #6c6c6c; }
.rect { position: absolute; left: 441px; top: 23px; width: 269px; height: 467px; background: #000; border: 1px dashed #fff; }
.hd { position: absolute; width: 13px; height: 13px; display: block; }
.tl { left: 428px; top: 10px; transform: rotate(-45deg) scale(1.180); }
.tc { left: 569px; top: 10px; }
.tr { left: 709px; top: 10px; transform: rotate(45deg) scale(1.180); }
.ml { left: 428px; top: 250px; transform: rotate(90deg); }
.mr { left: 709px; top: 250px; transform: rotate(90deg); }
.bl { left: 428px; top: 489px; transform: rotate(45deg) scale(1.180); }
.bc { left: 569px; top: 489px; }
.br { left: 709px; top: 489px; transform: rotate(-45deg) scale(1.180); }

.hscroll { height: 18px; flex: none; display: flex; align-items: center; }
.palscroll { height: 14px; flex: none; display: flex; align-items: center; padding-left: 5px; }
.arr-left { width: 0; height: 0; border: 4px solid transparent; border-left: 0; border-right: 6px solid #8a8a8a; flex: none; }
.arr-right { width: 0; height: 0; border: 4px solid transparent; border-right: 0; border-left: 6px solid #6a6a6a; flex: none; }
.hscroll .arr-left { margin-left: 21px; }
.hscroll .arr-right { margin-left: 5px; }
.track { border-radius: 7px; background: linear-gradient(#c8c8c8, #e2e2e2); height: 13px; flex: none; }
.hscroll .track { width: 1187px; margin-left: 7px; }
.palscroll .track { width: 1320px; margin-left: 5px; }
.palscroll .arr-right { margin-left: 3px; }
.thumb { height: 13px; border-radius: 7px; background: linear-gradient(#cacaca, #a6a6a6); border: 1px solid #888; }
.hthumb { width: 1187px; }
.pthumb { width: 256px; }

.vscroll { width: 25px; flex: none; position: relative; display: flex; flex-direction: column; align-items: center; padding: 5px 3px 0 0; }
.zoomfix { width: 15px; height: 15px; flex: none; border: 1px solid #a8a8a8; border-radius: 3px; background: #f4f4f4; font-size: 10px; line-height: 13px; text-align: center; color: #333; }
.arr-up { width: 0; height: 0; border: 3.500px solid transparent; border-top: 0; border-bottom: 6px solid #555; margin-top: 7px; flex: none; }
.arr-down { width: 0; height: 0; border: 3.500px solid transparent; border-bottom: 0; border-top: 6px solid #555; margin-top: 7px; flex: none; }
.vtrack { width: 12px; height: 496px; margin-top: 7px; flex: none; border-radius: 7px; background: linear-gradient(90deg, #c8c8c8, #e2e2e2); padding-top: 169px; }
.vthumb { height: 158px; border-radius: 7px; background: linear-gradient(90deg, #cacaca, #a6a6a6); border: 1px solid #888; }
.cms { width: 12px; height: 12px; margin-top: 8px; flex: none; }

.cmdbar { width: 34px; flex: none; display: flex; flex-direction: column; align-items: center; padding: 1px 0 0 0; border-left: 1px solid #bcbcbc; }
.snapbar { width: 32px; flex: none; display: flex; flex-direction: column; align-items: center; padding-top: 2px; }
.cmd { width: 30px; height: 32.400px; flex: none; display: flex; align-items: center; justify-content: center; border: 1px solid transparent; border-radius: 3px; }
.cmd.on { background: #ababab; border-color: #7e7e7e; height: 30.400px; margin: 1px 0; }
.csep { width: 20px; height: 11px; flex: none; background: linear-gradient(#bdbdbd, #bdbdbd) center / 100% 1px no-repeat; }

/* palette */
.palette { height: 21px; flex: none; display: flex; align-items: flex-start; padding: 2px 0 0 1px; border-top: 1px solid #b8b8b8; position: relative; }
.palette i { width: 16px; height: 16px; flex: none; }
.palette .lastswatch { width: 6px; }
.noneswatch { width: 16px; height: 16px; flex: none; display: block; }
.palmenu { display: block; flex: none; margin: 4px 0 0 4px; width: 0; height: 0; border-style: solid; border-color: transparent #555 transparent transparent; border-width: 4.500px 7px 4.500px 0; }

/* status */
.statusbar { height: 27px; flex: none; display: flex; align-items: center; font-size: 13px; }
.fs { width: 122px; padding-left: 2px; flex: none; font-size: 11px; line-height: 13px; }
.fsrow { display: flex; }
.fsl { width: 63px; }
.fsrow b { font-weight: bold; }
.opl { width: 19px; padding-left: 3px; }
.small .entry { width: 33px; font-size: 12px; }
.small { height: 23px; }
.ssep { width: 1px; height: 24px; background: #bcbcbc; margin: 0 0 0 5px; flex: none; }
.eye { width: 14px; height: 12px; margin-left: 5px; flex: none; display: block; }
.slock { width: 14px; height: 14px; margin-left: 8px; flex: none; display: block; }
.layer { width: 89px; height: 24px; margin-left: 5px; padding: 0 5px; font-size: 11px; font-weight: bold; }
.msg { flex: 1; padding-left: 2px; white-space: nowrap; color: #444; font-size: 13px; }
.msg b { color: #3a3a3a; }
.inl { margin-left: 3px; }
.coords { width: 75px; height: 26px; flex: none; border-left: 1px solid #c4c4c4; padding: 0 8px 0 0; font-size: 11px; line-height: 13px; }
.crow { display: flex; justify-content: space-between; padding-left: 2px; letter-spacing: .6px; }
.zl { width: 16px; font-size: 11.500px; }
.zoomspin .entry { width: 44px; text-align: right; padding: 0 6px 0 0; font-size: 12px; }
.zoomspin { margin-right: 1px; height: 23px; }
.zoomspin .arrows { width: 11px; }

.pointer { position: absolute; left: 400px; top: 58px; width: 14px; height: 20px; }
```
